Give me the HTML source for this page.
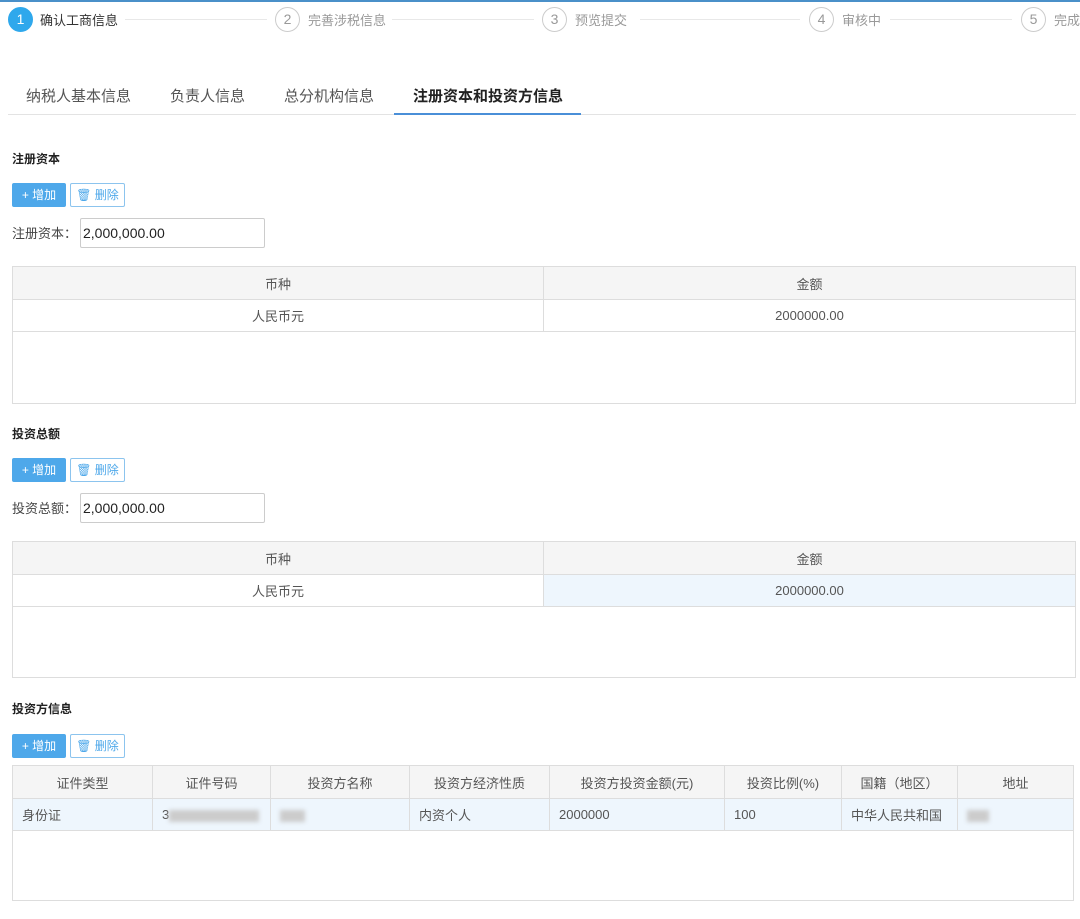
<!DOCTYPE html>
<html><head><meta charset="utf-8"><style>
*{margin:0;padding:0;box-sizing:border-box}
body{width:1080px;height:919px;background:#fff;font-family:"Liberation Sans","Noto Sans CJK SC",sans-serif;color:#333;font-size:13px;position:relative;overflow:hidden}
.a{position:absolute;white-space:nowrap}
.topline{left:0;top:0;width:1080px;height:2px;background:#4a90c9}
.circ{width:25px;height:25px;border-radius:50%;border:1px solid #ccc;color:#999;text-align:center;line-height:23px;font-size:14px;background:#fff}
.circ.on{background:#2fa8ec;border-color:#2fa8ec;color:#fff}
.st{font-size:13px;color:#999;top:10px}
.ln{height:1px;background:#e8e8e8;top:19px}
.tab{top:85px;font-size:15px;color:#555}
.h{font-size:12px;font-weight:bold;color:#222}
.btn{height:24px;border-radius:2px;font-size:12px;line-height:22px;text-align:center}
.add{width:54px;background:#4ea8ea;color:#fff;border:1px solid #4ea8ea}
.del{width:55px;border:1px solid #8cc4ee;color:#4ea8ea;background:#fff}
.lbl{font-size:13px;color:#444}
.inp{width:185px;height:30px;border:1px solid #ccc;border-radius:2px;font-size:14px;line-height:28px;padding-left:2px;color:#222}
table{border-collapse:collapse;position:absolute;font-size:13px;color:#555}
td{border:1px solid #ddd;text-align:center}
.box{position:absolute;border:1px solid #ddd;border-top:none}
.hd td{background:#f5f5f5;height:33px}
.bl{display:inline-block;height:12px;background:#ccc;filter:blur(2px);vertical-align:middle}
</style></head><body>
<div class="a topline"></div>
<div class="a circ on" style="left:8px;top:7px">1</div>
<div class="a st" style="left:40px;color:#333">确认工商信息</div>
<div class="a ln" style="left:125px;width:142px"></div>
<div class="a circ" style="left:275px;top:7px">2</div>
<div class="a st" style="left:308px">完善涉税信息</div>
<div class="a ln" style="left:392px;width:142px"></div>
<div class="a circ" style="left:542px;top:7px">3</div>
<div class="a st" style="left:575px">预览提交</div>
<div class="a ln" style="left:640px;width:160px"></div>
<div class="a circ" style="left:809px;top:7px">4</div>
<div class="a st" style="left:842px">审核中</div>
<div class="a ln" style="left:890px;width:122px"></div>
<div class="a circ" style="left:1021px;top:7px">5</div>
<div class="a st" style="left:1054px">完成</div>

<div class="a tab" style="left:26px">纳税人基本信息</div>
<div class="a tab" style="left:170px">负责人信息</div>
<div class="a tab" style="left:284px">总分机构信息</div>
<div class="a tab" style="left:413px;color:#222;font-weight:bold">注册资本和投资方信息</div>
<div class="a" style="left:8px;top:114px;width:1068px;height:1px;background:#e3e3e3"></div>
<div class="a" style="left:394px;top:113px;width:187px;height:2px;background:#4a8fd8"></div>

<div class="a h" style="left:12px;top:150px">注册资本</div>
<div class="a btn add" style="left:12px;top:183px">+ 增加</div>
<div class="a btn del" style="left:70px;top:183px">🗑 删除</div>
<div class="a lbl" style="left:12px;top:223px">注册资本：</div>
<div class="a inp" style="left:80px;top:218px">2,000,000.00</div>
<table style="left:12px;top:266px;width:1064px"><tr class="hd"><td style="width:531px">币种</td><td>金额</td></tr><tr><td style="height:32px">人民币元</td><td>2000000.00</td></tr></table>
<div class="box" style="left:12px;top:331px;width:1064px;height:73px"></div>

<div class="a h" style="left:12px;top:425px">投资总额</div>
<div class="a btn add" style="left:12px;top:458px">+ 增加</div>
<div class="a btn del" style="left:70px;top:458px">🗑 删除</div>
<div class="a lbl" style="left:12px;top:498px">投资总额：</div>
<div class="a inp" style="left:80px;top:493px">2,000,000.00</div>
<table style="left:12px;top:541px;width:1064px"><tr class="hd"><td style="width:531px">币种</td><td>金额</td></tr><tr><td style="height:32px">人民币元</td><td style="background:#eef6fd">2000000.00</td></tr></table>
<div class="box" style="left:12px;top:606px;width:1064px;height:72px"></div>

<div class="a h" style="left:12px;top:700px">投资方信息</div>
<div class="a btn add" style="left:12px;top:734px">+ 增加</div>
<div class="a btn del" style="left:70px;top:734px">🗑 删除</div>
<table style="left:12px;top:765px;width:1062px">
<tr class="hd"><td style="width:140px">证件类型</td><td style="width:118px">证件号码</td><td style="width:139px">投资方名称</td><td style="width:140px">投资方经济性质</td><td style="width:175px">投资方投资金额(元)</td><td style="width:117px">投资比例(%)</td><td style="width:116px">国籍（地区）</td><td>地址</td></tr>
<tr style="background:#eef6fd"><td style="height:32px;text-align:left;padding-left:9px">身份证</td><td style="text-align:left;padding-left:9px">3<span class="bl" style="width:90px"></span></td><td style="text-align:left;padding-left:9px"><span class="bl" style="width:25px"></span></td><td style="text-align:left;padding-left:9px">内资个人</td><td style="text-align:left;padding-left:9px">2000000</td><td style="text-align:left;padding-left:9px">100</td><td style="text-align:left;padding-left:9px">中华人民共和国</td><td style="text-align:left;padding-left:9px"><span class="bl" style="width:22px"></span></td></tr>
</table>
<div class="box" style="left:12px;top:830px;width:1062px;height:71px"></div>
</body></html>
